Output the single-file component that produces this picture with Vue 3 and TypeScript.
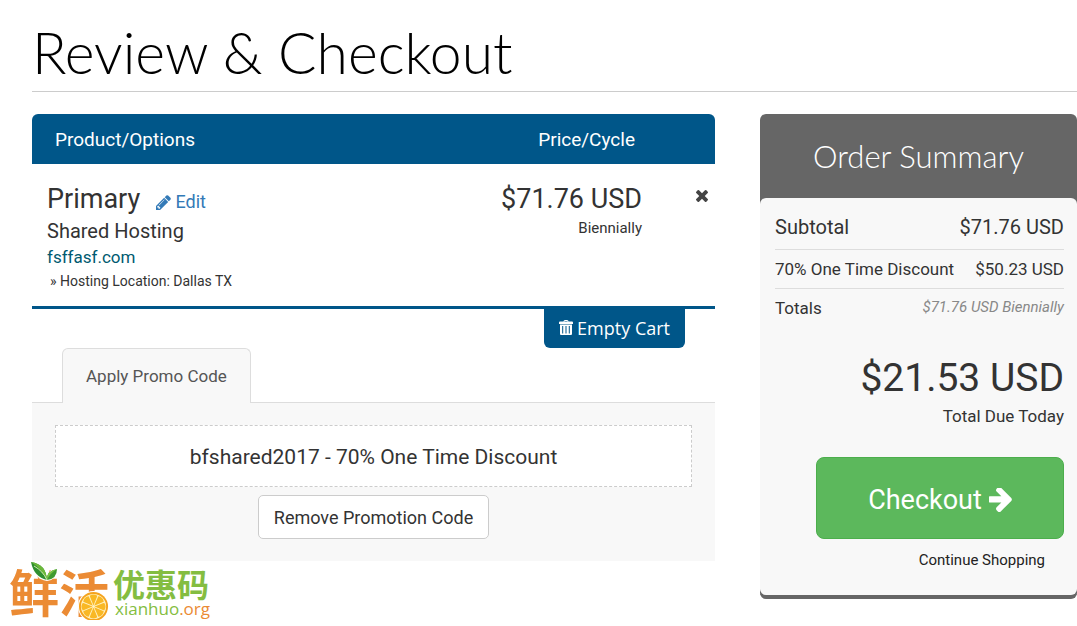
<script setup lang="ts">
import { ref } from 'vue'

interface CartItem {
  name: string
  group: string
  domain: string
  option: string
  price: string
  cycle: string
}

const items = ref<CartItem[]>([
  {
    name: 'Primary',
    group: 'Shared Hosting',
    domain: 'fsffasf.com',
    option: '» Hosting Location: Dallas TX',
    price: '$71.76 USD',
    cycle: 'Biennially',
  },
])

const petals = [0, 45, 90, 135, 180, 225, 270, 315]
</script>

<template>
  <div class="page">
    <h1 class="title">Review &amp; Checkout</h1>

    <div class="columns">
      <main class="cart">
        <table class="items">
          <thead>
            <tr>
              <th scope="col" class="col-product">Product/Options</th>
              <th scope="col" class="col-price">Price/Cycle</th>
              <th class="col-remove"></th>
            </tr>
          </thead>
          <tbody>
            <tr v-for="item in items" :key="item.domain">
              <td class="product">
                <div class="name">
                  {{ item.name }}
                  <a href="#" class="edit">
                    <svg class="pencil" viewBox="128 128 1536 1536" aria-hidden="true">
                      <path fill="currentColor" d="M491 1536l91-91-235-235-91 91v107h128v128h107zm523-928q0-22-22-22-10 0-17 7l-542 542q-7 7-7 17 0 22 22 22 10 0 17-7l542-542q7-7 7-17zm-54-192l416 416-832 832h-416v-416zm683 96q0 53-37 90l-166 166-416-416 166-165q36-38 90-38 53 0 91 38l235 234q37 39 37 91z" />
                    </svg>
                    Edit
                  </a>
                </div>
                <div class="group">{{ item.group }}</div>
                <div class="domain">{{ item.domain }}</div>
                <div class="option">{{ item.option }}</div>
              </td>
              <td class="price">
                <div class="amount">{{ item.price }}</div>
                <div class="cycle">{{ item.cycle }}</div>
              </td>
              <td class="remove">
                <button type="button" class="remove-button" aria-label="Remove">
                  <svg viewBox="302 366 1188 1188" aria-hidden="true">
                    <path fill="currentColor" d="M1490 1322q0 40-28 68l-136 136q-28 28-68 28t-68-28l-294-294-294 294q-28 28-68 28t-68-28l-136-136q-28-28-28-68t28-68l294-294-294-294q-28-28-28-68t28-68l136-136q28-28 68-28t68 28l294 294 294-294q28-28 68-28t68 28l136 136q28 28 28 68t-28 68l-294 294 294 294q28 28 28 68z" />
                  </svg>
                </button>
              </td>
            </tr>
          </tbody>
        </table>

        <div class="empty-row">
          <button type="button" class="empty">
            <svg viewBox="0 0 14 15" aria-hidden="true">
              <path fill="currentColor" fill-rule="evenodd" d="M4.5 1.5Q4.5 0 6 0h2q1.500 0 1.500 1.500H13q1 0 1 1V4H0V2.500q0-1 1-1zM5.500 1.500h3V1h-3zM1 4.500h12V14q0 1-1 1H2q-1 0-1-1zM3.200 6v7.500h1V6zM6.500 6v7.500h1V6zM9.800 6v7.500h1V6z" />
            </svg>
            Empty Cart
          </button>
        </div>

        <div class="tabs">
          <button type="button" class="tab">Apply Promo Code</button>
        </div>
        <section class="promo">
          <div class="code">bfshared2017 - 70% One Time Discount</div>
          <button type="button" class="remove-code">Remove Promotion Code</button>
        </section>
      </main>

      <aside class="summary">
        <h2 class="summary-title">Order Summary</h2>
        <div class="summary-body">
          <div class="line subtotal"><span>Subtotal</span><span>$71.76 USD</span></div>
          <div class="line discount"><span>70% One Time Discount</span><span>$50.23 USD</span></div>
          <div class="line totals"><span>Totals</span><em>$71.76 USD Biennially</em></div>
          <div class="due">$21.53 USD</div>
          <div class="due-label">Total Due Today</div>
          <button type="button" class="checkout">
            Checkout
            <svg viewBox="192 252 1408 1487" aria-hidden="true">
              <path fill="currentColor" d="M1600 960q0 54-37 91l-651 651q-39 37-91 37-51 0-90-37l-75-75q-38-38-38-91t38-91l293-293h-704q-52 0-84.500-37.500t-32.500-90.500v-128q0-53 32.500-90.500t84.500-37.500h704l-293-294q-38-36-38-90t38-90l75-75q38-38 90-38 53 0 91 38l651 651q37 35 37 90z" />
            </svg>
          </button>
          <a href="#" class="continue">Continue Shopping</a>
        </div>
      </aside>
    </div>

    <footer class="brand">
      <div class="brand-mark">
        <span class="brand-main">鲜活</span>
        <svg class="leaf" viewBox="0 0 28 22" aria-hidden="true">
          <path fill="#fff" d="M0 0q16 1 19 12 3-6 9-5-1 12-11 13Q3 18 0 0z" />
          <path fill="#2f8f2f" d="M1 1q15 2 16 18Q4 16 1 1z" />
          <path fill="#6cb83a" d="M1 1q15 2 16 18Q12 8 1 1z" />
          <path fill="#3f9a30" d="M17 19q-1-9 10-11 0 10-10 11z" />
          <path fill="#7cc242" d="M17 19q-1-9 10-11-7 4-10 11z" />
          <path fill="none" stroke="#d5edae" d="M4 5q9 5 13 14" />
        </svg>
        <svg class="orange" viewBox="0 0 32 32" aria-hidden="true">
          <circle cx="16" cy="16" r="16" fill="#fff" />
          <circle cx="16" cy="16" r="15" fill="#f5a31c" />
          <circle cx="16" cy="16" r="13" fill="#fff3c4" />
          <path v-for="angle in petals" :key="angle" fill="#f9b824" :transform="`rotate(${angle} 16 16)`" d="M16 15l-4-10q4-3 8 0z" />
        </svg>
      </div>
      <div class="brand-text">
        <span class="brand-name">优惠码</span>
        <span class="brand-url">xianhuo<b>.org</b></span>
      </div>
    </footer>
  </div>
</template>

<style>
body {
  margin: 0;
  background: #fff;
}
</style>

<style scoped>
.page {
  font-family: Roboto, "Liberation Sans", sans-serif;
  color: #333;
  padding-left: 32px;
}
button {
  font-family: inherit;
  cursor: pointer;
}
a {
  text-decoration: none;
}
.title {
  margin: 0;
  padding-top: 20px;
  height: 71px;
  line-height: 64px;
  border-bottom: 1px solid #ccc;
  font-family: Lato, sans-serif;
  font-weight: 300;
  font-size: 57px;
  color: #000;
}
.columns {
  display: grid;
  grid-template-columns: minmax(0, 683fr) minmax(0, 317fr);
  column-gap: 45px;
  align-items: start;
  margin-top: 22px;
}
.items {
  width: 100%;
  table-layout: fixed;
  border-collapse: separate;
  border-spacing: 0;
  border-bottom: 3px solid #005689;
}
th {
  height: 50px;
  padding: 0;
  background: #005689;
  color: #fff;
  font-size: 19px;
  font-weight: 400;
}
.col-product {
  padding-left: 23px;
  text-align: left;
  border-top-left-radius: 6px;
}
.col-price {
  width: 193px;
  padding-right: 7px;
  text-align: right;
}
.col-remove {
  width: 73px;
  border-top-right-radius: 6px;
}
td {
  vertical-align: top;
  padding: 20px 0 14px;
}
.product {
  padding-left: 15px;
}
.name,
.amount {
  height: 30px;
  margin-bottom: 4px;
  line-height: 30px;
  font-size: 27px;
}
.edit {
  margin-left: 9px;
  font-size: 18px;
  color: #337ab7;
}
.pencil {
  width: 15px;
  height: 15px;
  vertical-align: -2px;
}
.group {
  font-size: 20px;
  line-height: 26px;
}
.domain {
  font-size: 17px;
  line-height: 26px;
  color: #005a70;
}
.option {
  padding-left: 3px;
  font-size: 14px;
  line-height: 22px;
}
.price {
  text-align: right;
}
.cycle {
  font-size: 15px;
  line-height: 20px;
}
.remove {
  text-align: right;
  padding-right: 7px;
}
.remove-button {
  display: inline-flex;
  padding: 6px 0;
  border: 0;
  background: none;
  color: #444;
}
.remove-button svg {
  width: 12px;
  height: 12px;
}
.empty-row {
  display: flex;
  justify-content: flex-end;
  padding-right: 30px;
}
.empty {
  display: flex;
  align-items: center;
  gap: 4px;
  height: 39px;
  padding: 0 15px 2px;
  border: 0;
  border-radius: 0 0 6px 6px;
  background: #005689;
  color: #fff;
  font-family: "Open Sans", sans-serif;
  font-size: 18px;
}
.empty svg {
  width: 14px;
  height: 15px;
}
.tabs {
  display: flex;
  padding-left: 30px;
  border-bottom: 1px solid #ddd;
}
.tab {
  height: 55px;
  margin-bottom: -1px;
  padding: 0 23px;
  border: 1px solid #ddd;
  border-bottom: 0;
  border-radius: 6px 6px 0 0;
  background: #f8f8f8;
  color: #555;
  font-size: 17px;
}
.promo {
  display: flex;
  flex-direction: column;
  align-items: center;
  gap: 8px;
  padding: 22px 23px;
  background: #f8f8f8;
}
.code {
  align-self: stretch;
  padding-top: 2px;
  border: 1px dashed #ccc;
  background: #fff;
  line-height: 58px;
  text-align: center;
  font-size: 21px;
}
.remove-code {
  height: 44px;
  padding: 0 15px;
  border: 1px solid #ccc;
  border-radius: 5px;
  background: #fff;
  color: #333;
  font-size: 18px;
}
.summary {
  border-radius: 6px;
  border-bottom: 4px solid #666;
  background: #666;
}
.summary-title {
  margin: 0;
  line-height: 84px;
  text-align: center;
  font-family: Lato, sans-serif;
  font-weight: 300;
  font-size: 31px;
  color: #fff;
}
.summary-body {
  display: flex;
  flex-direction: column;
  align-items: flex-end;
  padding: 8px 13px 24px 15px;
  border-radius: 6px;
  background: #f8f8f8;
}
.line {
  align-self: stretch;
  display: flex;
  justify-content: space-between;
  line-height: 38px;
  font-size: 17px;
}
.line:not(.totals) {
  border-bottom: 1px solid #ddd;
}
.subtotal {
  line-height: 43px;
  font-size: 20px;
}
.totals em {
  color: #888;
  font-size: 15px;
  line-height: 36px;
}
.due {
  margin-top: 28px;
  line-height: 46px;
  font-size: 39px;
}
.due-label {
  line-height: 30px;
  font-size: 17px;
}
.checkout {
  display: flex;
  align-items: center;
  justify-content: center;
  gap: 7px;
  width: 248px;
  height: 82px;
  margin: 26px 0 10px;
  padding: 4px 0 0;
  border: 1px solid #4cae4c;
  border-radius: 8px;
  background: #5cb85c;
  color: #fff;
  font-size: 27px;
}
.checkout svg {
  width: 23px;
  height: 24px;
}
.continue {
  margin-right: 19px;
  line-height: 22px;
  font-size: 15px;
  color: #222;
}
.brand {
  display: flex;
  gap: 4px;
  margin-left: -23px;
  margin-top: -39px;
  font-family: "Noto Sans CJK SC", sans-serif;
}
.brand-mark {
  position: relative;
  line-height: 60px;
  font-size: 50px;
  font-weight: 700;
  color: #eb8b34;
}
.leaf {
  position: absolute;
  left: 21px;
  top: 1px;
  width: 28px;
  height: 22px;
}
.orange {
  position: absolute;
  left: 69px;
  top: 31px;
  width: 31px;
  height: 31px;
}
.brand-text {
  display: flex;
  flex-direction: column;
  padding-top: 7px;
}
.brand-name {
  line-height: 32px;
  font-size: 32px;
  font-weight: 700;
  color: #84bd41;
}
.brand-url {
  padding-left: 2px;
  line-height: 20px;
  font-family: "Open Sans", sans-serif;
  font-size: 17px;
  color: #84bd41;
}
.brand-url b {
  font-weight: 400;
  color: #eb8b34;
}
</style>
